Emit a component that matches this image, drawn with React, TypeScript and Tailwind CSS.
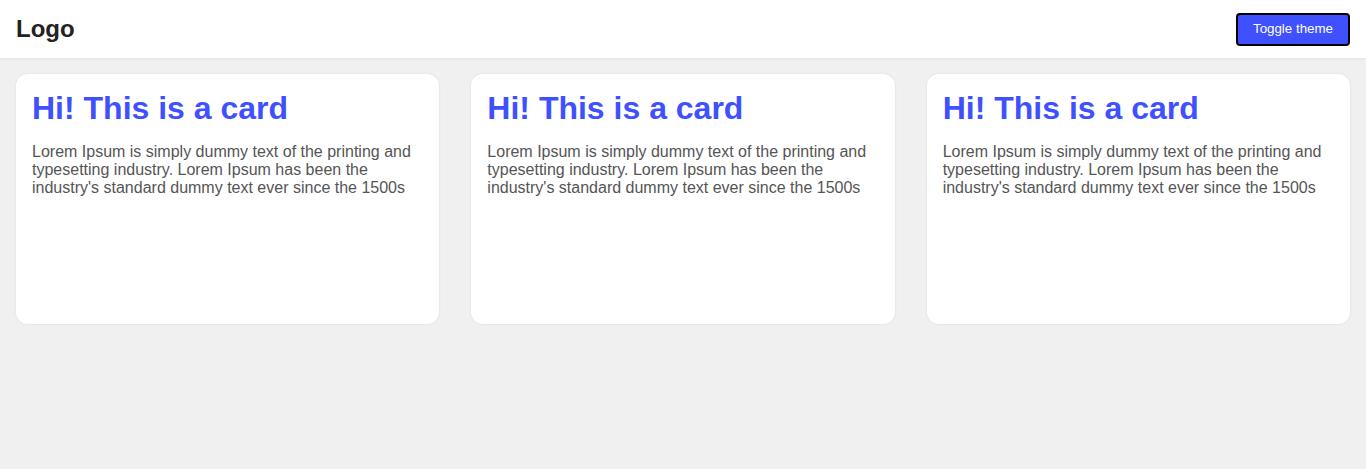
import React from "react";

const Card = () => (
  <div className="h-[250px] rounded-xl bg-white p-4 shadow-[0_0_3px_rgba(0,0,0,0.08)]">
    <h1 className="text-[32px] font-bold leading-[37px] text-[#3f51ff]">Hi! This is a card</h1>
    <p className="mt-4 text-base leading-[18px] text-[#555]">
      Lorem Ipsum is simply dummy text of the printing and typesetting industry. Lorem Ipsum has been the
      industry's standard dummy text ever since the 1500s
    </p>
  </div>
);

export default function App() {
  return (
    <div className="min-h-[469px] bg-[#f0f0f0] font-['Liberation_Sans',Arial,sans-serif]">
      <header className="relative z-10 flex h-[58px] items-center justify-between bg-white px-4 shadow-[0_1px_3px_rgba(0,0,0,0.06)]">
        <div className="text-2xl font-bold text-[#222]">Logo</div>
        <button className="h-[33px] rounded border-2 border-black bg-[#3f51ff] px-[15px] text-[13.33px] text-white">
          Toggle theme
        </button>
      </header>
      <main className="grid grid-cols-3 gap-8 p-4">
        <Card />
        <Card />
        <Card />
      </main>
    </div>
  );
}
